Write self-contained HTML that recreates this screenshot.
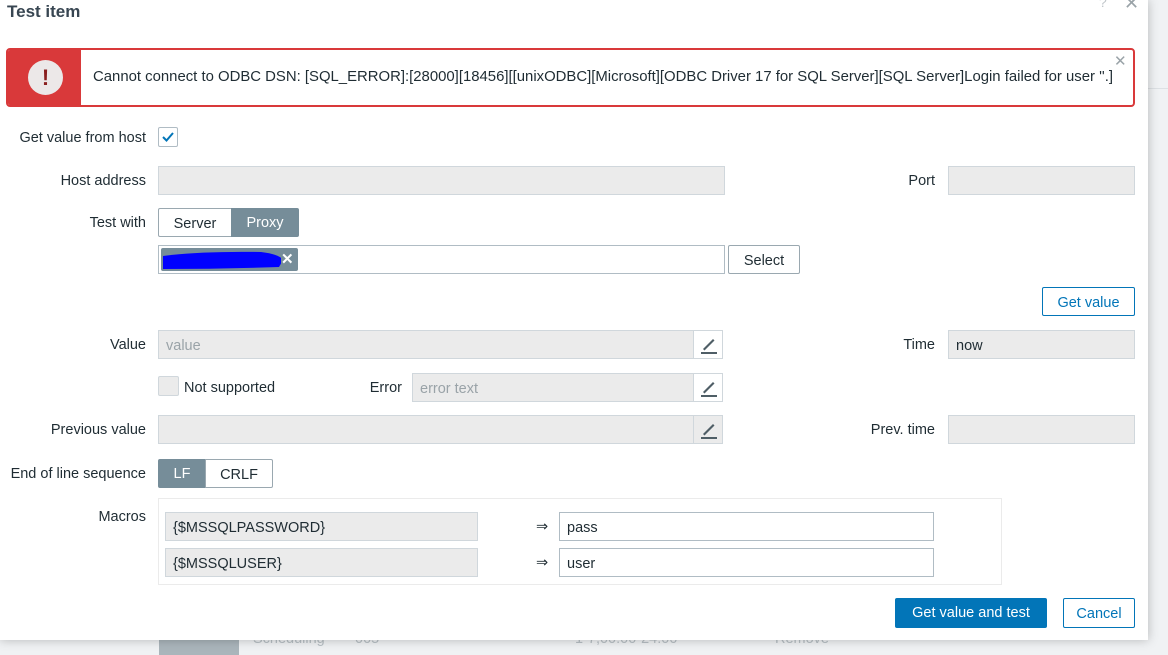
<!DOCTYPE html>
<html><head><meta charset="utf-8"><style>
*{box-sizing:border-box;margin:0;padding:0}
body{width:1168px;height:654px;overflow:hidden;background:#f0f2f4;font-family:"Liberation Sans",Arial,sans-serif;font-size:14.5px;color:#1f2c33;position:relative}
.a{position:absolute}
.dlg{left:0;top:0;width:1148px;height:640px;background:#fff;box-shadow:0 0 10px rgba(0,0,0,.25)}
.lbl{position:absolute;text-align:right;width:146px;left:0;line-height:31px;color:#1f2c33}
.in{position:absolute;background:#ebebeb;border:1px solid #d0d7dc;height:29px;line-height:30px;padding-left:7px;color:#1f2c33}
.ph{color:#9aa3a8}
.btn{position:absolute;border:1px solid #9aa8b0;background:#fff;height:29px;line-height:30px;text-align:center;border-radius:2px}
.pen{position:absolute;width:30px;height:29px;border:1px solid #d0d7dc;background:#fff}
.pen svg{position:absolute;left:6px;top:5px}
.wi{position:absolute;background:#fff;border:1px solid #b0bcc4;height:29px;line-height:30px;padding-left:7px}
</style></head><body>
<div class="a" style="left:1148px;top:88px;width:20px;height:1px;background:#dde1e4"></div>
<div class="a" style="left:155px;top:625px;width:680px;height:29px;color:#b8c0c5">
 <div class="a" style="left:4px;top:4px;width:80px;height:26px;background:#aab5bb"></div>
 <div class="a" style="left:98px;top:6px">Scheduling</div>
 <div class="a" style="left:200px;top:6px">005</div>
 <div class="a" style="left:420px;top:6px">1-7,00:00-24:00</div>
 <div class="a" style="left:620px;top:6px">Remove</div>
</div>
<div class="a dlg">
 <div class="a" style="left:7px;top:2px;font-size:17px;font-weight:bold;color:#384652">Test item</div>
 <div class="a" style="left:1099px;top:-6px;color:#c0c6ca;font-size:14px">?</div>
 <div class="a" style="left:1124px;top:-7px;color:#9aa3a8;font-size:18px">✕</div>

 <div class="a" style="left:6px;top:48px;width:1129px;height:59px;border:2px solid #d9393a;border-radius:4px;overflow:hidden">
  <div class="a" style="left:0;top:0;width:73px;height:100%;background:#d9393a"></div>
  <div class="a" style="left:20px;top:10px;width:35px;height:35px;border-radius:50%;background:#ece8e8;color:#8a1f1f;font-weight:bold;font-size:22px;text-align:center;line-height:35px">!</div>
  <div class="a" style="left:85px;top:19px;font-size:14.9px;color:#1f2c33;white-space:nowrap">Cannot connect to ODBC DSN: [SQL_ERROR]:[28000][18456][[unixODBC][Microsoft][ODBC Driver 17 for SQL Server][SQL Server]Login failed for user ''.]</div>
  <div class="a" style="left:1106px;top:2px;color:#9aa3a8;font-size:15px">✕</div>
 </div>

 <div class="lbl" style="top:123px">Get value from host</div>
 <div class="a" style="left:158px;top:127px;width:20px;height:20px;border:1px solid #b0bcc4;border-radius:2px"><svg width="18" height="18"><path d="M4 9l3.5 3.5L14 5" stroke="#0275b8" stroke-width="2" fill="none"/></svg></div>

 <div class="lbl" style="top:166px">Host address</div>
 <div class="in" style="left:158px;top:166px;width:567px"></div>
 <div class="a" style="left:860px;top:166px;width:75px;text-align:right;line-height:31px">Port</div>
 <div class="in" style="left:948px;top:166px;width:187px"></div>

 <div class="lbl" style="top:208px">Test with</div>
 <div class="btn" style="left:158px;top:208px;width:74px;border-radius:2px 0 0 2px">Server</div>
 <div class="a" style="left:231px;top:208px;width:68px;height:29px;line-height:30px;text-align:center;background:#768d99;color:#fff;border-radius:0 2px 2px 0">Proxy</div>

 <div class="wi" style="left:158px;top:245px;width:567px"></div>
 <div class="a" style="left:161px;top:248px;width:137px;height:23px;background:#768d99;border-radius:2px">
  <svg class="a" style="left:0;top:0" width="120" height="23"><path d="M2 8 Q40 3 100 4 Q118 6 122 12 L118 19 Q60 21 2 21 Z" fill="#0000ff"/></svg>
  <div class="a" style="left:120px;top:2px;color:#fff;font-weight:bold;font-size:15px">✕</div>
 </div>
 <div class="btn" style="left:728px;top:245px;width:72px">Select</div>

 <div class="btn" style="left:1042px;top:287px;width:93px;border-color:#0275b8;color:#0275b8">Get value</div>

 <div class="lbl" style="top:330px">Value</div>
 <div class="in ph" style="left:158px;top:330px;width:565px">value</div>
 <div class="pen" style="left:693px;top:330px"><svg width="18" height="18"><path d="M3 13L13 3l1.5 1.5L4.5 14.5z" fill="#4f5e66"/><rect x="1" y="16" width="16" height="2" fill="#4f5e66"/></svg></div>
 <div class="a" style="left:860px;top:330px;width:75px;text-align:right;line-height:31px">Time</div>
 <div class="in" style="left:948px;top:330px;width:187px">now</div>

 <div class="a" style="left:158px;top:376px;width:21px;height:20px;border:1px solid #d0d7dc;background:#ebebeb;border-radius:2px"></div>
 <div class="a" style="left:184px;top:373px;line-height:31px">Not supported</div>
 <div class="a" style="left:340px;top:373px;width:62px;text-align:right;line-height:31px">Error</div>
 <div class="in ph" style="left:412px;top:373px;width:311px">error text</div>
 <div class="pen" style="left:693px;top:373px"><svg width="18" height="18"><path d="M3 13L13 3l1.5 1.5L4.5 14.5z" fill="#4f5e66"/><rect x="1" y="16" width="16" height="2" fill="#4f5e66"/></svg></div>

 <div class="lbl" style="top:415px">Previous value</div>
 <div class="in" style="left:158px;top:415px;width:565px"></div>
 <div class="pen" style="left:693px;top:415px;background:#ebebeb"><svg width="18" height="18"><path d="M3 13L13 3l1.5 1.5L4.5 14.5z" fill="#4f5e66"/><rect x="1" y="16" width="16" height="2" fill="#4f5e66"/></svg></div>
 <div class="a" style="left:820px;top:415px;width:115px;text-align:right;line-height:31px">Prev. time</div>
 <div class="in" style="left:948px;top:415px;width:187px"></div>

 <div class="lbl" style="top:459px">End of line sequence</div>
 <div class="a" style="left:158px;top:459px;width:48px;height:29px;line-height:30px;text-align:center;background:#768d99;color:#fff;border-radius:2px 0 0 2px">LF</div>
 <div class="btn" style="left:205px;top:459px;width:68px;border-radius:0 2px 2px 0">CRLF</div>

 <div class="lbl" style="top:502px">Macros</div>
 <div class="a" style="left:158px;top:498px;width:844px;height:87px;border:1px solid #ebebeb"></div>
 <div class="in" style="left:165px;top:512px;width:313px">{$MSSQLPASSWORD}</div>
 <div class="a" style="left:536px;top:512px;line-height:30px">⇒</div>
 <div class="wi" style="left:559px;top:512px;width:375px">pass</div>
 <div class="in" style="left:165px;top:548px;width:313px">{$MSSQLUSER}</div>
 <div class="a" style="left:536px;top:548px;line-height:30px">⇒</div>
 <div class="wi" style="left:559px;top:548px;width:375px">user</div>

 <div class="a" style="left:895px;top:598px;width:152px;height:30px;line-height:31px;text-align:center;background:#0275b8;color:#fff;border-radius:2px">Get value and test</div>
 <div class="btn" style="left:1063px;top:598px;width:72px;height:30px;line-height:31px;border-color:#0275b8;color:#0275b8">Cancel</div>
</div>
</body></html>
